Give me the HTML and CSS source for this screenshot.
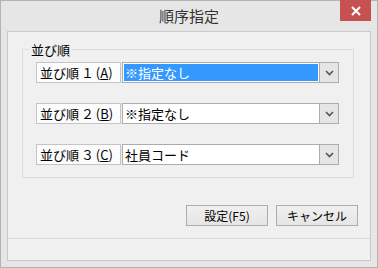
FILE: index.html
```html
<!DOCTYPE html>
<html lang="ja">
<head>
    <meta charset="UTF-8">
    <title>順序指定</title>
    <link rel="stylesheet" href="styles.css">
</head>
<body>
    <div class="window">
        <div class="titlebar">
            <span class="title">順序指定</span>
            <span class="close">
                <svg width="10" height="10" viewBox="0 0 10 10"><path d="M1 1L9 9M9 1L1 9" stroke="#fff" stroke-width="2"/></svg>
            </span>
        </div>

        <div class="client">
            <fieldset class="group">
                <legend>並び順</legend>

                <div class="row">
                    <span class="label">並び順 １ (<u>A</u>)</span>
                    <div class="combo">
                        <span class="value selected">※指定なし</span>
                        <span class="drop"><svg width="9" height="6" viewBox="0 0 9 6"><path d="M1 1L4.5 4.5L8 1" fill="none" stroke="#555" stroke-width="1.6"/></svg></span>
                    </div>
                </div>

                <div class="row">
                    <span class="label">並び順 ２ (<u>B</u>)</span>
                    <div class="combo">
                        <span class="value">※指定なし</span>
                        <span class="drop"><svg width="9" height="6" viewBox="0 0 9 6"><path d="M1 1L4.5 4.5L8 1" fill="none" stroke="#555" stroke-width="1.6"/></svg></span>
                    </div>
                </div>

                <div class="row">
                    <span class="label">並び順 ３ (<u>C</u>)</span>
                    <div class="combo">
                        <span class="value">社員コード</span>
                        <span class="drop"><svg width="9" height="6" viewBox="0 0 9 6"><path d="M1 1L4.5 4.5L8 1" fill="none" stroke="#555" stroke-width="1.6"/></svg></span>
                    </div>
                </div>
            </fieldset>

            <div class="actions">
                <button>設定(F5)</button>
                <button>キャンセル</button>
            </div>

            <div class="statusbar"></div>
        </div>
    </div>
</body>
</html>
```

FILE: styles.css
```css
body {
    margin: 0;
    font-family: "Noto Sans CJK JP", "Noto Sans", sans-serif;
    color: #000;
}

.window {
    width: 378px;
    height: 268px;
    box-sizing: border-box;
    border: 1px solid #b4b4b4;
    background: #e6e6e6;
    display: flex;
    flex-direction: column;
}

.titlebar {
    position: relative;
    height: 30px;
    display: flex;
    align-items: center;
    justify-content: center;
}

.title {
    font-size: 15px;
    color: #333;
    line-height: 18px;
    margin-top: -1px;
}

/* 閉じるボタン */
.close {
    position: absolute;
    top: -1px;
    right: 6px;
    width: 31px;
    height: 21px;
    background: #c75050;
    display: flex;
    align-items: center;
    justify-content: center;
}

.client {
    flex: 1;
    margin: 0 6px 6px;
    border: 1px solid #c9c9c9;
    background: #f0f0f0;
    display: flex;
    flex-direction: column;
}

.group {
    margin: 10px 16px 0 14px;
    padding: 5px 0 12px 13px;
    border: 1px solid #dcdcdc;
    display: flex;
    flex-direction: column;
    gap: 20px;
}

.group legend {
    font-size: 13px;
    line-height: 15px;
    padding: 0 2px;
    margin-left: -7px;
}

.row {
    display: flex;
    height: 21px;
    font-size: 13px;
    line-height: 17px;
}

.label {
    width: 85px;
    box-sizing: border-box;
    border: 1px solid #c4c4c4;
    background: #fcfcfc;
    padding: 1px 0 0 3px;
    white-space: pre;
    word-spacing: -1px;
}

.combo {
    width: 217px;
    margin-left: 1px;
    box-sizing: border-box;
    border: 1px solid #acacac;
    background: #fff;
    display: flex;
}

.value {
    flex: 1;
    margin: 1px;
    padding: 0 0 0 1px;
    line-height: 17px;
}

.value.selected {
    background: #3399ff;
    color: #fff;
}

.drop {
    width: 18px;
    margin: -1px -1px -1px 0;
    border: 1px solid #acacac;
    background: #e5e5e5;
    display: flex;
    align-items: center;
    justify-content: center;
}

.actions {
    display: flex;
    justify-content: flex-end;
    gap: 8px;
    margin: 27px 12px 0 0;
}

button {
    width: 82px;
    height: 21px;
    padding: 0;
    border: 1px solid #adadad;
    background: linear-gradient(#f0f0f0, #e5e5e5);
    font-family: inherit;
    font-size: 12px;
    line-height: 17px;
    color: #000;
}

.statusbar {
    margin-top: auto;
    height: 21px;
    border-top: 1px solid #d7d7d7;
}
```
